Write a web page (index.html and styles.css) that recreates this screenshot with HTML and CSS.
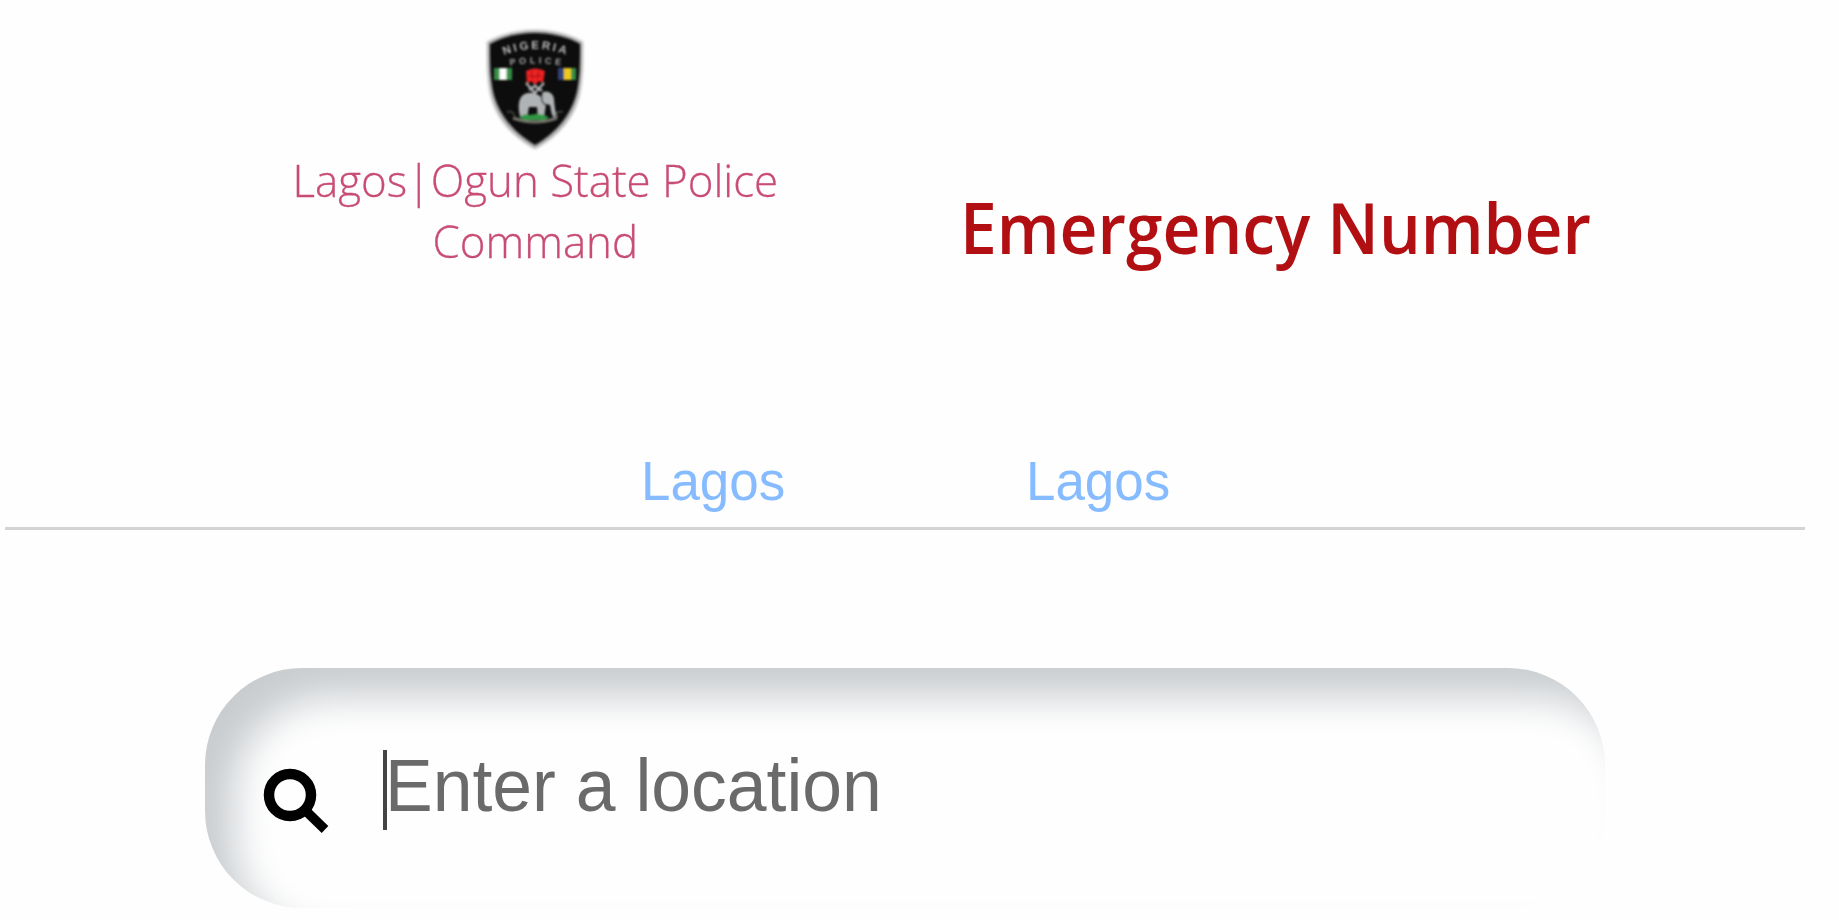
FILE: index.html
```html
<!DOCTYPE html>
<html lang="en">
<head>
<meta charset="utf-8">
<title>Emergency Number</title>
<link rel="stylesheet" href="styles.css">
</head>
<body>
<header class="header">
  <div class="brand">
    <svg class="crest" viewBox="0 0 120 135" role="img" aria-label="Nigeria Police">
      <defs>
        <filter id="soft" x="-10%" y="-10%" width="120%" height="120%"><feGaussianBlur stdDeviation="1.5"/></filter>
        <filter id="fine"><feGaussianBlur stdDeviation=".8"/></filter>
        <path id="arc1" d="M29 35Q60 23 92 35"/>
        <path id="arc2" d="M35 45.500Q60 41.500 87 45.500"/>
      </defs>
      <path d="M60 10C76 10 95 14 108 22C108 42 108 56 105 73C100 97 84 116 60 129C36 116 20 97 15 73C12 56 12 42 12 22C25 14 44 10 60 10Z" fill="#aaa" filter="url(#soft)"/>
      <path d="M60 13C76 13 93 17 105 24C105 43 105 56 102 71C97 94 81 113 60 125C39 113 23 94 18 71C15 56 15 43 15 24C27 17 44 13 60 13Z" fill="#090b0d" filter="url(#fine)"/>
      <g filter="url(#fine)">
        <text class="crest-title"><textPath href="#arc1" textLength="63">NIGERIA</textPath></text>
        <text class="crest-sub"><textPath href="#arc2" textLength="51">POLICE</textPath></text>
        <path fill="#349044" d="M19 48h18v12H19zM84 48h17v12H84z"/>
        <path fill="#fff" d="M24.500 48h7v12h-7z"/>
        <path fill="#304579" d="M83 48h6v12h-6z"/><path fill="#eec91b" d="M89 48h7v12h-7z"/>
        <path fill="#ee2320" d="M51 51Q60 46 70 51L68 63L64 61L60 65L56 61L52 64Z"/>
        <path d="M53 56h14M56 51l2 8M64 51l-2 8" stroke="#a61217" stroke-width="1" fill="none"/>
        <path d="M51 63l9 10 9-10M54 70l6-4 7 5" stroke="#aeb1b3" stroke-width="2.400" fill="none"/>
        <path fill="#b0b3b5" d="M45 96C43 88 43 79 48 75C54 71 62 73 66 77L68 72C74 70 79 74 79 80C80 88 80 93 83 97L79 98C76 94 76 89 75 85L71 84L69 98H63L62 87L54 87L52 98H46Z"/>
        <path d="M67 75q-2 7 4 10" stroke="#303336" stroke-width="1.500" fill="none"/>
        <path d="M32 92q5-2 8 4M88 92q-6-2-8 5" stroke="#4f493b" stroke-width="1.500" fill="none"/>
        <path d="M38 98q22 8 44 0" stroke="#77766d" stroke-width="3" fill="none"/>
        <path d="M44 97q6-4 11-2 9-3 19 2l-4 3H49Z" fill="#2f9742"/>
      </g>
    </svg>
    <p class="command">Lagos|Ogun State Police<br>Command</p>
  </div>
  <h1 class="title">Emergency Number</h1>
</header>
<nav class="tabs"><a class="tab">Lagos</a><a class="tab">Lagos</a></nav>
<main class="search">
  <svg class="search-icon" viewBox="0 0 66 66" aria-hidden="true">
    <circle cx="27" cy="27" r="21" fill="none" stroke="#000" stroke-width="10.500"/>
    <path d="M43 43L62 61.500" stroke="#000" stroke-width="9.500"/>
  </svg>
  <span class="caret"></span>
  <span class="placeholder">Enter a location</span>
</main>
</body>
</html>
```
FILE: styles.css
```css
body { margin: 0; width: 1839px; height: 920px; overflow: hidden; background: #fefefe; font-family: "Liberation Sans", Arial, sans-serif; }
.header { display: flex; height: 440px; box-sizing: border-box; padding: 20px 0 0 285px; }
.brand { display: flex; flex-direction: column; align-items: center; width: 500px; }
.crest { width: 120px; height: 135px; }
.crest-title { font: bold 11.500px "Liberation Sans", sans-serif; fill: #bbb; }
.crest-sub { font: bold 9px "Liberation Sans", sans-serif; fill: #aaa; }
.command { margin: -6px 0 0; font: 300 45px/61px "Open Sans", sans-serif; color: #c84c73; text-align: center; white-space: nowrap; transform: scaleX(.974); -webkit-text-stroke: .3px #c84c73; }
.title { margin: 162px 0 0 175px; height: 91px; font: 600 67px/91px "Open Sans", sans-serif; color: #b20f13; white-space: nowrap; transform: scale(.983, 1.04); transform-origin: 0 50%; }
.tabs { display: flex; gap: 239px; height: 90px; box-sizing: border-box; margin: 0 34px 0 5px; padding-left: 636px; border-bottom: 3px solid #d4d4d4; }
.tab { width: 146px; height: 83px; margin-top: -1.500px; font-size: 54px; line-height: 83px; color: #86bbff; transform: scale(.98, 1.04); transform-origin: 0 50%; }
.search { display: flex; align-items: flex-start; width: 1400px; height: 240px; margin: 138px 0 0 205px; box-sizing: border-box; padding: 82px 0 0 58px; border-radius: 97px; box-shadow: inset 30px 30px 38px -1px #c9cdd0; }
.search-icon { width: 66px; height: 66px; margin-top: 18px; }
.caret { width: 4px; height: 80px; margin-left: 54px; background: #444; }
.placeholder { height: 80px; margin: -5px 0 0 -2px; font-size: 72px; line-height: 80px; color: #6a6a6a; white-space: nowrap; transform: scale(.993, 1.04); transform-origin: 0 50%; }
```
